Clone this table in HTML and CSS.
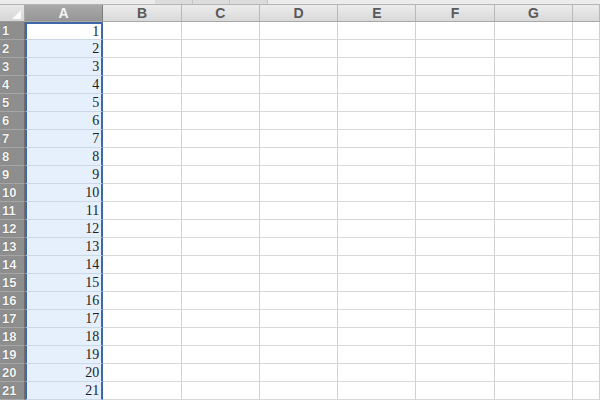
FILE: index.html
```html
<!DOCTYPE html>
<html>
<head>
<meta charset="utf-8">
<link rel="stylesheet" href="styles.css">
</head>
<body>
<div class="topbar">
  <div class="tabs"><span class="tab"></span><span class="tab"></span><span class="tab"></span></div>
</div>
<div class="sheet" id="sheet">
  <div class="corner"><span class="tri"></span></div>
  <div class="colhead sel">A</div>
  <div class="colhead">B</div>
  <div class="colhead">C</div>
  <div class="colhead">D</div>
  <div class="colhead">E</div>
  <div class="colhead">F</div>
  <div class="colhead">G</div>
  <div class="colhead"></div>
</div>
<script src="script.js"></script>
</body>
</html>
```

FILE: script.js
```js
const sheet = document.getElementById('sheet');
for (let r = 1; r <= 21; r++) {
  const h = document.createElement('div');
  h.className = 'rowhead';
  h.textContent = r;
  sheet.appendChild(h);
  const a = document.createElement('div');
  a.className = 'cell a' + (r === 1 ? ' active' : '');
  a.textContent = r;
  sheet.appendChild(a);
  for (let c = 0; c < 7; c++) {
    const d = document.createElement('div');
    d.className = 'cell';
    sheet.appendChild(d);
  }
}
```

FILE: styles.css
```css
html, body {
  margin: 0;
  padding: 0;
  background: #ffffff;
  overflow: hidden;
}
body {
  width: 600px;
  height: 400px;
  font-family: "Liberation Sans", Arial, sans-serif;
}
.topbar {
  height: 4px;
  background: #ececec;
  border-bottom: 1px solid #b4b4b4;
  position: relative;
}
.tabs {
  position: absolute;
  left: 155px;
  top: 0;
  width: 113px;
  height: 4px;
  display: flex;
  background: #dcdcdc;
}
.tab {
  flex: 1;
  border-right: 1px solid #c4c4c4;
}
.sheet {
  display: grid;
  grid-template-columns: 25px repeat(7, 78.3px) 1fr;
  grid-template-rows: 17px repeat(21, 18px);
}
.corner {
  background: linear-gradient(#e8e8e8, #d6d6d6);
  border-right: 1px solid #a8a8a8;
  border-bottom: 1px solid #9a9a9a;
  position: relative;
  box-sizing: border-box;
}
.tri {
  position: absolute;
  right: 3px;
  bottom: 2px;
  width: 0;
  height: 0;
  border-left: 9px solid transparent;
  border-bottom: 9px solid #fafafa;
}
.colhead {
  background: linear-gradient(#ececec, #d9d9d9);
  border-right: 1px solid #b8b8b8;
  border-bottom: 1px solid #a8a8a8;
  box-sizing: border-box;
  text-align: center;
  font-weight: bold;
  font-size: 14px;
  line-height: 17px;
  color: #595959;
}
.colhead.sel {
  background: linear-gradient(#a9a9a9, #969696);
  color: #f4f4f4;
  border-right: 1px solid #7c7c7c;
}
.rowhead {
  background: #8e8e8e;
  border-bottom: 1px solid #a6a6a6;
  border-right: 1px solid #6f6f6f;
  box-sizing: border-box;
  font-weight: bold;
  font-size: 13px;
  line-height: 18px;
  color: #f6f6f6;
  padding-left: 2px;
  text-shadow: 0 0 1px #444;
}
.cell {
  border-right: 1px solid #d2d2d2;
  border-bottom: 1px solid #d8d8d8;
  box-sizing: border-box;
}
.cell.a {
  background: #e5f0fc;
  border-left: 2px solid #3f68a6;
  border-right: 2px solid #3f68a6;
  border-bottom: 1px solid #cbd8e6;
  text-align: right;
  padding-right: 2px;
  font-family: "Liberation Serif", "Times New Roman", serif;
  font-size: 14px;
  line-height: 18px;
  color: #1e1e1e;
}
.cell.a.active {
  background: #ffffff;
  border-top: 2px solid #3f68a6;
  line-height: 15px;
}
```
